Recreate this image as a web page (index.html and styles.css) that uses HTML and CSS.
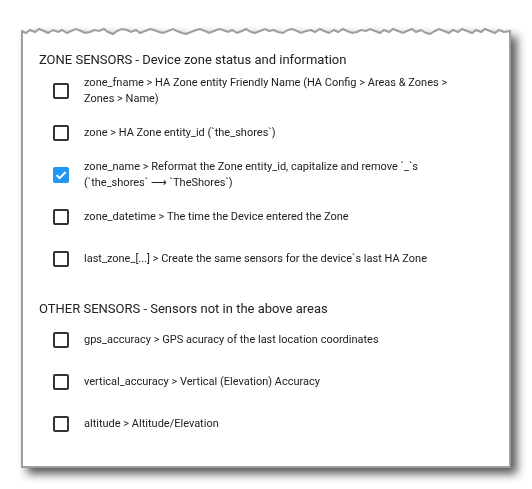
FILE: index.html
```html
<!DOCTYPE html>
<html>
<head>
<meta charset="utf-8">
<link rel="stylesheet" href="styles.css">
</head>
<body>
<div class="sheet">
  <svg class="torn" viewBox="0 0 490 10" width="490" height="10" preserveAspectRatio="none">
    <polygon fill="#fff" points="1,10 1,3 5,5 9,2 14,4 18,1 23,3 27,5 32,2 37,4 41,2 46,5 50,3 55,1 60,3 64,5 69,4 73,2 78,3 83,1 87,4 92,6 96,3 101,1 106,2 110,4 115,2 119,5 124,3 129,1 133,2 138,4 142,5 147,3 152,1 156,3 161,5 165,6 170,4 175,2 179,1 184,3 188,5 193,3 198,1 202,2 207,4 211,2 216,5 221,3 225,1 230,4 234,5 239,3 244,1 248,3 253,2 257,4 262,5 267,2 271,1 276,3 280,5 285,3 290,2 294,4 299,1 303,3 308,5 313,2 317,4 322,1 326,3 331,5 336,4 340,2 345,3 349,1 354,3 359,5 363,2 368,4 372,1 377,3 382,5 386,3 391,1 395,4 400,2 405,5 409,6 414,3 418,1 423,3 428,5 432,2 437,4 441,1 446,3 451,5 455,2 460,4 464,1 469,3 474,5 478,2 483,4 489,3 489,10"/>
    <polyline fill="none" stroke="#9e9e9e" stroke-width="2" stroke-linejoin="miter" points="1,11 1,3 5,5 9,2 14,4 18,1 23,3 27,5 32,2 37,4 41,2 46,5 50,3 55,1 60,3 64,5 69,4 73,2 78,3 83,1 87,4 92,6 96,3 101,1 106,2 110,4 115,2 119,5 124,3 129,1 133,2 138,4 142,5 147,3 152,1 156,3 161,5 165,6 170,4 175,2 179,1 184,3 188,5 193,3 198,1 202,2 207,4 211,2 216,5 221,3 225,1 230,4 234,5 239,3 244,1 248,3 253,2 257,4 262,5 267,2 271,1 276,3 280,5 285,3 290,2 294,4 299,1 303,3 308,5 313,2 317,4 322,1 326,3 331,5 336,4 340,2 345,3 349,1 354,3 359,5 363,2 368,4 372,1 377,3 382,5 386,3 391,1 395,4 400,2 405,5 409,6 414,3 418,1 423,3 428,5 432,2 437,4 441,1 446,3 451,5 455,2 460,4 464,1 469,3 474,5 478,2 483,4 489,3 489,11"/>
  </svg>
  <div class="content">
    <section class="group">
      <h2 class="heading">ZONE SENSORS - Device zone status and information</h2>
      <label class="row"><span class="box"></span><span class="text">zone_fname &gt; HA Zone entity Friendly Name (HA Config &gt; Areas &amp; Zones &gt; Zones &gt; Name)</span></label>
      <label class="row"><span class="box"></span><span class="text">zone &gt; HA Zone entity_id (`the_shores`)</span></label>
      <label class="row"><span class="box checked"><svg viewBox="0 0 16 16" width="16" height="16"><path d="M3.5 8.1 L6.6 11.2 L12.7 5" fill="none" stroke="#fff" stroke-width="2"/></svg></span><span class="text">zone_name &gt; Reformat the Zone entity_id, capitalize and remove `_`s (`the_shores` ⟶ `TheShores`)</span></label>
      <label class="row"><span class="box"></span><span class="text">zone_datetime &gt; The time the Device entered the Zone</span></label>
      <label class="row"><span class="box"></span><span class="text">last_zone_[...] &gt; Create the same sensors for the device`s last HA Zone</span></label>
    </section>
    <section class="group second">
      <h2 class="heading">OTHER SENSORS - Sensors not in the above areas</h2>
      <label class="row"><span class="box"></span><span class="text">gps_accuracy &gt; GPS acuracy of the last location coordinates</span></label>
      <label class="row"><span class="box"></span><span class="text">vertical_accuracy &gt; Vertical (Elevation) Accuracy</span></label>
      <label class="row"><span class="box"></span><span class="text">altitude &gt; Altitude/Elevation</span></label>
    </section>
  </div>
</div>
</body>
</html>
```

FILE: styles.css
```css
html, body {
  margin: 0;
  padding: 0;
  background: #fff;
}
body {
  font-family: Roboto, "Liberation Sans", sans-serif;
  color: #212121;
  padding-bottom: 21px;
}
.sheet {
  margin: 28px 0 0 21px;
  width: 490px;
  filter: drop-shadow(6px 6px 5px rgba(0,0,0,0.65));
}
.torn {
  display: block;
  overflow: visible;
}
.content {
  background: #fff;
  border: 2px solid #9e9e9e;
  border-top: none;
  padding: 14px 16px 21px 16px;
}
.heading {
  margin: 0 0 2px 0;
  font-size: 13px;
  line-height: 16px;
  font-weight: 400;
  color: #212121;
}
.second {
  margin-top: 21px;
}
.row {
  display: flex;
  align-items: center;
  min-height: 42px;
  padding-right: 20px;
}
.box {
  flex: 0 0 auto;
  width: 16px;
  height: 16px;
  box-sizing: border-box;
  border: 2px solid #333;
  border-radius: 2px;
  margin-left: 14px;
  margin-right: 15px;
  position: relative;
}
.box.checked {
  background: #2196f3;
  border-color: #2196f3;
}
.box.checked svg {
  position: absolute;
  left: -2px;
  top: -2px;
}
.text {
  font-size: 11px;
  line-height: 16px;
}
```
